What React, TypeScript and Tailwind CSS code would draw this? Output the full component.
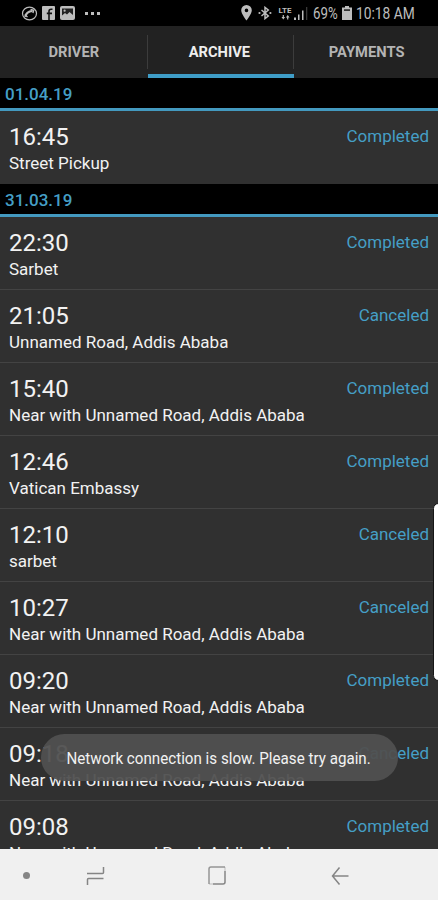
type Trip = {
    time: string;
    place: string;
    status: 'Completed' | 'Canceled';
};

type Day = {
    date: string;
    trips: Trip[];
};

const tabs = [
    { label: 'DRIVER', spacing: '' },
    { label: 'ARCHIVE', spacing: 'pr-[3px]' },
    { label: 'PAYMENTS', spacing: 'pl-[2px]' },
];

const days: Day[] = [
    {
        date: '01.04.19',
        trips: [{ time: '16:45', place: 'Street Pickup', status: 'Completed' }],
    },
    {
        date: '31.03.19',
        trips: [
            { time: '22:30', place: 'Sarbet', status: 'Completed' },
            { time: '21:05', place: 'Unnamed Road, Addis Ababa', status: 'Canceled' },
            { time: '15:40', place: 'Near with Unnamed Road, Addis Ababa', status: 'Completed' },
            { time: '12:46', place: 'Vatican Embassy', status: 'Completed' },
            { time: '12:10', place: 'sarbet', status: 'Canceled' },
            { time: '10:27', place: 'Near with Unnamed Road, Addis Ababa', status: 'Canceled' },
            { time: '09:20', place: 'Near with Unnamed Road, Addis Ababa', status: 'Completed' },
            { time: '09:18', place: 'Near with Unnamed Road, Addis Ababa', status: 'Canceled' },
            { time: '09:08', place: 'Near with Unnamed Road, Addis Ababa', status: 'Completed' },
        ],
    },
];

function StatusBar() {
    return (
        <div className="h-[26px] shrink-0 bg-black flex items-center justify-between pl-[21px] pr-6 text-[#bdbdbd]">
            <div className="flex items-center">
                {/* Missed call */}
                <svg width="17" height="15" viewBox="0 0 17 15" fill="none" stroke="currentColor">
                    <ellipse cx="8.5" cy="7.5" rx="7" ry="6.3" strokeWidth="1.2" />
                    <path d="M4.3 10.8C4.8 7.5 7.2 5.3 11.5 5" strokeWidth="2.2" />
                    <path d="M9.5 3.5l3.2.8-.8 2.7M3.8 8.6l2.7 2.4" strokeWidth="1.4" />
                </svg>
                {/* Facebook */}
                <svg className="ml-[4px]" width="13" height="14" viewBox="0 0 13 14">
                    <rect width="13" height="14" rx="1" fill="currentColor" />
                    <path d="M7 14V5.2Q7 3.2 9.2 3.2H10.5M4.8 7.4h5.2" stroke="#111" strokeWidth="1.6" fill="none" />
                </svg>
                {/* Picture */}
                <svg className="ml-[5px]" width="15" height="14" viewBox="0 0 15 14">
                    <rect width="15" height="14" rx="2" fill="currentColor" />
                    <path d="M2 2.5h11v6.5L9.5 6 7 8.5 5 7l-3 2.5z" fill="#222" />
                    <circle cx="4.6" cy="4.7" r="1.1" fill="currentColor" />
                </svg>
                <div className="ml-[10px] flex gap-[3px]">
                    <span className="size-[3px] bg-current" />
                    <span className="size-[3px] bg-current" />
                    <span className="size-[3px] bg-current" />
                </div>
            </div>

            <div className="flex items-center">
                {/* Location */}
                <svg width="11" height="16" viewBox="0 0 11 16" fill="currentColor">
                    <path fillRule="evenodd" d="M5.5 0A5.3 5.3 0 0 0 .2 5.3C.2 9 5.5 15.5 5.5 15.5S10.8 9 10.8 5.3A5.3 5.3 0 0 0 5.5 0zm0 3.6a1.8 1.8 0 1 1 0 3.6 1.8 1.8 0 0 1 0-3.6z" />
                </svg>
                {/* Bluetooth */}
                <svg className="ml-[6px]" width="14" height="14" viewBox="0 0 14 14" fill="none" stroke="currentColor" strokeWidth="1.5">
                    <path d="M3.5 4l6.8 6L7 12.6V1.4L10.3 4 3.5 10" />
                    <circle cx="1.5" cy="7" r="1.1" fill="currentColor" stroke="none" />
                    <circle cx="12.4" cy="7" r="1.1" fill="currentColor" stroke="none" />
                </svg>
                {/* LTE with data arrows */}
                <div className="ml-[5px] w-[16px] flex flex-col items-center">
                    <span className="text-[8px] leading-[8px] font-bold">LTE</span>
                    <svg width="9" height="5" viewBox="0 0 8 5" fill="currentColor">
                        <path d="M0 2h1.2V0h1.2v2h1.2L1.8 4.6zM4.4 2.6L6.2 0 8 2.6H6.8v2H5.6v-2z" />
                    </svg>
                </div>
                {/* Signal */}
                <svg className="ml-[1px] mt-px" width="14" height="13" viewBox="0 0 14 13" fill="currentColor">
                    <path d="M0 10.5h2V13H0zM4 7.5h1.5V13H4zM8 3.5h1.5V13H8z" />
                    <path d="M12 0h1.3v13H12z" opacity=".3" />
                </svg>
                <span className="ml-[5px] w-[25px] text-[17px] leading-none whitespace-nowrap">
                    <span className="inline-block origin-left scale-x-[0.78]">69%</span>
                </span>
                {/* Battery */}
                <svg className="ml-[4px]" width="10" height="14" viewBox="0 0 10 14">
                    <path d="M3 0h4v1.5h3V14H0V1.5h3z" fill="currentColor" />
                    <path d="M2 3.2h6v1.8H2z" fill="#333" />
                </svg>
                <span className="ml-[4px] w-[58px] text-[17px] leading-none whitespace-nowrap">
                    <span className="inline-block origin-left scale-x-[0.81]">10:18 AM</span>
                </span>
            </div>
        </div>
    );
}

function TabBar({ active }: { active: string }) {
    return (
        <div className="h-[52px] shrink-0 bg-[#222222] grid grid-cols-[148px_146px_144px]">
            {tabs.map((tab, i) => (
                <button
                    key={tab.label}
                    className={`relative flex items-center justify-center text-[15px] font-bold ${tab.spacing} ${tab.label === active
                        ? 'text-[#eeeeee]'
                        : 'text-[#b4b4b4]'
                        }`}
                >
                    <span className="scale-x-[0.98]">{tab.label}</span>
                    {tab.label === active && <span className="absolute inset-x-0 bottom-0 h-[4px] bg-[#3f9dc7]" />}
                    {i > 0 && <span className="absolute left-[-1px] top-[9px] h-[34px] w-px bg-[#3c3c3c]" />}
                </button>
            ))}
        </div>
    );
}

function TripRow({ trip }: { trip: Trip }) {
    return (
        <div className="h-[73px] shrink-0 px-[9px] pt-[12px] border-b border-[#434343] last:border-b-transparent flex justify-between">
            <div>
                <div className="text-[24px] leading-[28px] text-[#f2f2f2]">{trip.time}</div>
                <div className="mt-[2px] text-[17px] leading-[20px] text-[#f2f2f2] whitespace-nowrap">{trip.place}</div>
            </div>
            <div className="mt-[3px] text-[17px] leading-[20px] text-[#459fc6]">{trip.status}</div>
        </div>
    );
}

function NavBar() {
    return (
        <div className="h-[51px] shrink-0 bg-[#f0f0f0] flex items-center text-[#858585]">
            <span className="ml-[23px] mt-[2px] size-[7px] rounded-full bg-current" />
            <svg className="ml-[56px] mt-[2px]" width="19" height="20" viewBox="0 0 19 20" fill="none" stroke="currentColor" strokeWidth="1.5">
                <path d="M1 7.5h15.5q1 0 1-1V1M17.5 12.5H2.5q-1 0-1 1V19" />
            </svg>
            <svg className="ml-[103px] mt-[2px]" width="18" height="19" viewBox="0 0 18 19" fill="none" stroke="currentColor" strokeWidth="1.5">
                <path d="M17 1H3Q1 1 1 3v15" strokeOpacity=".85" />
                <path d="M17 5v11q0 2-2 2H5" />
                <path d="M17 1v4M1 18h4" strokeOpacity=".3" />
            </svg>
            <svg className="ml-[105px] mt-[2px]" width="18" height="20" viewBox="0 0 18 20" fill="none" stroke="currentColor" strokeWidth="1.5">
                <path d="M17.5 10H1.5M8.5 1.5L1.5 10l7 8.5" />
            </svg>
        </div>
    );
}

export default function App() {
    return (
        <div className="relative w-[438px] h-[900px] overflow-hidden flex flex-col bg-black font-[Roboto,sans-serif]">
            <StatusBar />
            <TabBar active="ARCHIVE" />

            <div className="flex-1 min-h-0 overflow-hidden">
                {days.map((day) => (
                    <section key={day.date}>
                        <h2 className="h-[33px] px-[5px] pt-[6px] bg-black border-b-[3px] border-[#4399bf] text-[17px] leading-[20px] font-medium text-[#459fc6]">
                            {day.date}
                        </h2>
                        <div className="bg-[#303030]">
                            {day.trips.map((trip) => (
                                <TripRow key={trip.time} trip={trip} />
                            ))}
                        </div>
                    </section>
                ))}
            </div>

            <NavBar />

            {/* Edge panel handle */}
            <div className="absolute right-[-6px] top-[503px] h-[178px] w-[11px] rounded-[6px] bg-white border border-[#161616]" />

            {/* Toast */}
            <div className="absolute left-[41px] top-[734px] w-[357px] h-[47px] pt-[2px] pr-[2px] rounded-full bg-[#505050]/95 flex items-center justify-center whitespace-nowrap">
                <span className="text-[17px] text-[#f2f2f2] scale-x-[0.892]">Network connection is slow. Please try again.</span>
            </div>
        </div>
    );
}
